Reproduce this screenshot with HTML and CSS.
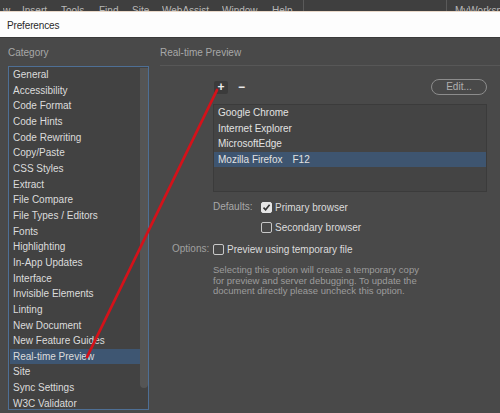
FILE: index.html
```html
<!DOCTYPE html>
<html>
<head>
<meta charset="utf-8">
<link rel="stylesheet" href="styles.css">
</head>
<body>
<div class="menubar">
  <span class="mi m0">w</span><span class="mi m1">Insert</span><span class="mi m2">Tools</span><span class="mi m3">Find</span><span class="mi m4">Site</span><span class="mi m5">WebAssist</span><span class="mi m6">Window</span><span class="mi m7">Help</span><span class="sep s1"></span><span class="sep s2"></span><span class="mi m8">MyWorkspace</span>
</div>
<div class="titlebar">Preferences</div>
<div class="dialog">
  <div class="left">
    <div class="head">Category</div>
    <div class="catlist">
      <div class="items">
        <div class="item">General</div>
        <div class="item">Accessibility</div>
        <div class="item">Code Format</div>
        <div class="item">Code Hints</div>
        <div class="item">Code Rewriting</div>
        <div class="item">Copy/Paste</div>
        <div class="item">CSS Styles</div>
        <div class="item">Extract</div>
        <div class="item">File Compare</div>
        <div class="item">File Types / Editors</div>
        <div class="item">Fonts</div>
        <div class="item">Highlighting</div>
        <div class="item">In-App Updates</div>
        <div class="item">Interface</div>
        <div class="item">Invisible Elements</div>
        <div class="item">Linting</div>
        <div class="item">New Document</div>
        <div class="item">New Feature Guides</div>
        <div class="item sel">Real-time Preview</div>
        <div class="item">Site</div>
        <div class="item">Sync Settings</div>
        <div class="item">W3C Validator</div>
      </div>
      <div class="scroll"><div class="thumb"></div></div>
    </div>
  </div>
  <div class="right">
    <div class="head rhead">Real-time Preview</div>
    <div class="content">
      <div class="toolbar">
        <span class="tbtn plus">+</span><span class="tbtn minus">−</span>
        <span class="edit">Edit...</span>
      </div>
      <div class="blist">
        <div class="brow">Google Chrome</div>
        <div class="brow">Internet Explorer</div>
        <div class="brow">MicrosoftEdge</div>
        <div class="brow bsel">Mozilla Firefox<span class="key">F12</span></div>
      </div>
      <div class="defaults">
        <div class="dlabel">Defaults:</div>
        <div class="dchecks">
          <div class="check"><span class="box on"><svg width="9" height="9" viewBox="0 0 9 9"><path d="M1.5 4.6 L3.6 6.8 L7.6 1.8" fill="none" stroke="#333" stroke-width="1.6"/></svg></span>Primary browser</div>
          <div class="check"><span class="box"></span>Secondary browser</div>
        </div>
      </div>
    </div>
    <div class="options">
      <div class="olabel">Options:</div>
      <div class="ocol">
        <div class="check"><span class="box"></span>Preview using temporary file</div>
        <p class="desc">Selecting this option will create a temporary copy for preview and server debugging. To update the document directly please uncheck this option.</p>
      </div>
    </div>
  </div>
</div>
<svg class="arrow" width="500" height="413" viewBox="0 0 500 413">
  <line x1="87" y1="357" x2="217" y2="90" stroke="#d3121a" stroke-width="2.8" stroke-linecap="round"/>
</svg>
</body>
</html>
```
FILE: styles.css
```css
* { box-sizing: border-box; }
html, body { margin: 0; padding: 0; }
body {
  width: 500px;
  height: 413px;
  overflow: hidden;
  background: #494949;
  font-family: "Liberation Sans", Arial, sans-serif;
  font-size: 10px;
  color: #d8d8d8;
  position: relative;
}
.menubar {
  height: 12px;
  background: #3f3f3f;
  overflow: hidden;
  display: flex;
  align-items: flex-start;
  white-space: nowrap;
  color: #b8b8b8;
  font-size: 10px;
  line-height: 11px;
  padding-top: 5px;
  border-bottom: 1px solid #e9d8c8;
}
.mi { display: inline-block; flex: none; overflow: hidden; }
.m0 { margin-left: 3px; width: 19px; }
.m1 { width: 39px; }
.m2 { width: 38px; }
.m3 { width: 33px; }
.m4 { width: 30px; }
.m5 { width: 60px; }
.m6 { width: 50px; }
.m7 { width: 31px; }
.sep { display: inline-block; flex: none; width: 1px; height: 12px; margin-top: -5px; background: #5a5a5a; }
.s2 { margin-left: 142px; }
.m8 { margin-left: 8px; }
.titlebar {
  height: 26px;
  background: #fdfdfd;
  color: #2a2a2a;
  font-size: 10px;
  letter-spacing: -0.15px;
  line-height: 27px;
  padding-left: 7px;
  border-bottom: 1px solid #3a3a3a;
}
.dialog { display: flex; height: 375px; }
.left { width: 160px; padding-left: 8px; flex: none; }
.head { height: 28px; line-height: 26px; padding-top: 2px; color: #a8a8a8; font-size: 10px; }
.catlist {
  width: 141px;
  height: 344px;
  border: 1px solid #4e6f95;
  background: #424242;
  display: flex;
}
.items { flex: 1; padding-left: 1px; }
.item { height: 15.67px; line-height: 15.67px; padding-left: 3px; white-space: nowrap; color: #dcdcdc; }
.item.sel { background: #3e5672; }
.scroll { width: 8px; flex: none; }
.thumb { height: 320px; margin-top: 1px; background: #555; border-radius: 0 0 4px 4px; }
.right { flex: 1; }
.rhead { border-bottom: 1px solid #575757; }
.content { padding-left: 53px; padding-right: 13px; }
.toolbar { display: flex; align-items: center; height: 38px; padding-top: 4px; }
.tbtn { display: inline-flex; align-items: center; justify-content: center; font-weight: bold; color: #eee; font-size: 12px; }
.plus { width: 14px; height: 13px; background: #3b3b3b; border-radius: 2px; margin-left: 1px; }
.minus { margin-left: 10px; }
.edit {
  margin-left: auto;
  width: 56px;
  height: 16px;
  border: 1.5px solid #8c8c8c;
  border-radius: 8px;
  color: #b0b0b0;
  text-align: center;
  line-height: 13px;
  font-size: 10px;
}
.blist {
  height: 88px;
  border: 1px solid #3b3b3b;
  background: #444;
}
.brow { height: 15.5px; line-height: 15.5px; padding-left: 4px; color: #e2e2e2; white-space: nowrap; }
.brow.bsel { background: #3e5570; }
.key { margin-left: 10px; }
.defaults { display: flex; margin-top: 7px; }
.dlabel { width: 48px; height: 16px; line-height: 16px; color: #a8a8a8; }
.dchecks { display: flex; flex-direction: column; gap: 4px; }
.check { display: flex; align-items: center; height: 16px; color: #dcdcdc; white-space: nowrap; }
.box {
  width: 11px; height: 11px;
  border: 1px solid #c8c8c8;
  border-radius: 2px;
  margin-right: 3px;
  display: inline-flex; align-items: center; justify-content: center;
  flex: none;
}
.box.on { background: #e6e6e6; border-color: #e6e6e6; }
.options { display: flex; margin-top: 6px; }
.olabel { width: 53px; padding-left: 12px; height: 16px; line-height: 16px; color: #a0a0a0; }
.ocol { flex: 1; }
.desc { margin: 8px 0 0 0; width: 210px; color: #9c9c9c; font-size: 9.5px; line-height: 10.5px; }
.arrow { position: absolute; left: 0; top: 0; pointer-events: none; }
```
